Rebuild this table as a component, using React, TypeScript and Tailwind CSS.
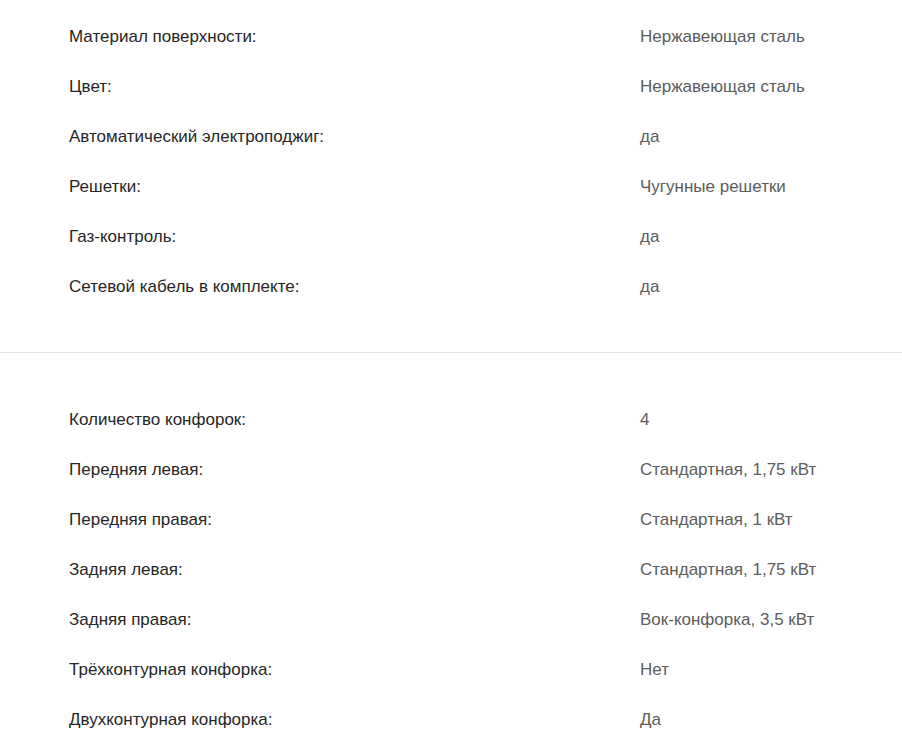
const general: [string, string][] = [
  ["Материал поверхности:", "Нержавеющая сталь"],
  ["Цвет:", "Нержавеющая сталь"],
  ["Автоматический электроподжиг:", "да"],
  ["Решетки:", "Чугунные решетки"],
  ["Газ-контроль:", "да"],
  ["Сетевой кабель в комплекте:", "да"],
];

const burners: [string, string][] = [
  ["Количество конфорок:", "4"],
  ["Передняя левая:", "Стандартная, 1,75 кВт"],
  ["Передняя правая:", "Стандартная, 1 кВт"],
  ["Задняя левая:", "Стандартная, 1,75 кВт"],
  ["Задняя правая:", "Вок-конфорка, 3,5 кВт"],
  ["Трёхконтурная конфорка:", "Нет"],
  ["Двухконтурная конфорка:", "Да"],
];

function Row({ label, value }: { label: string; value: string }) {
  return (
    <div className="flex h-[50px] items-center">
      <div className="w-[571px] shrink-0 text-[#262626]">{label}</div>
      <div className="text-[#5c5c5c]">{value}</div>
    </div>
  );
}

export default function App() {
  return (
    <div className="min-h-screen w-full bg-white font-['Liberation_Sans',Arial,sans-serif] text-[17px]">
      <section className="pl-[69px] pt-[12px] pb-[40px]">
        {general.map(([l, v]) => (
          <Row key={l} label={l} value={v} />
        ))}
      </section>
      <div className="h-px bg-[#e3e3e3]" />
      <section className="pl-[69px] pt-[42px] pb-[20px]">
        {burners.map(([l, v]) => (
          <Row key={l} label={l} value={v} />
        ))}
      </section>
    </div>
  );
}
